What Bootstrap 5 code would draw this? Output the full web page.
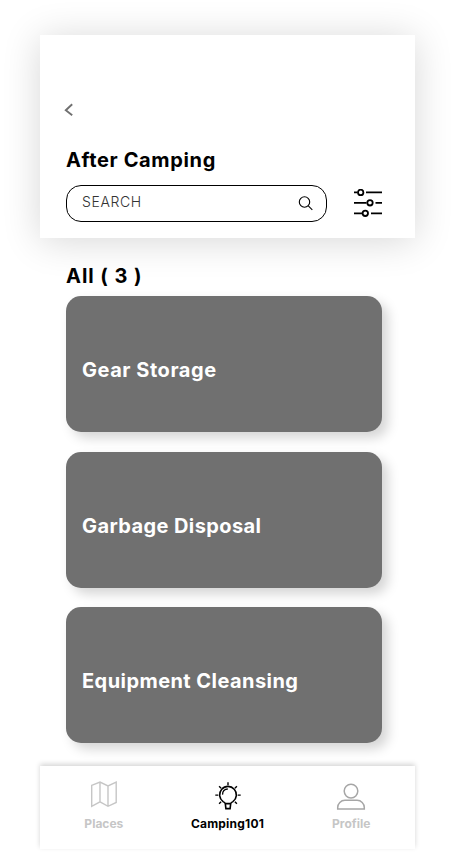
<!DOCTYPE html>
<html lang="en">
<head>
<meta charset="utf-8">
<meta name="viewport" content="width=device-width, initial-scale=1">
<title>After Camping</title>
<link href="https://cdn.jsdelivr.net/npm/bootstrap@5.3.0/dist/css/bootstrap.min.css" rel="stylesheet">
<style>
body{font-family:Inter,"Open Sans",sans-serif;color:#000;background:#fff;height:852px;overflow:hidden}
.phone{width:375px;margin-left:40px;padding-top:35px;height:852px}
.top-panel{height:203px;padding:68px 33px 0 26px;box-shadow:0 3px 36px rgba(0,0,0,.16)}
.back{width:12px;height:14px;margin-left:-3px;line-height:0}
.heading{font-size:20px;line-height:24px;font-weight:700;white-space:nowrap}
.title-main{margin-top:31px;letter-spacing:.64px}
.search-row{margin-top:13px}
.search-box{width:261px;height:37px;border:1px solid #000;border-radius:15px;padding:0 12px 0 15px}
.search-box input{font-size:14px;font-weight:300;line-height:18px;padding:0;color:#000;width:180px;height:20px;margin-top:-5px;letter-spacing:.6px}
.search-box input::placeholder{color:#333;opacity:1}
.filter-icon{margin-right:-1px}
.topics{padding:26px 33px 0 26px;height:528px}
.count{letter-spacing:.95px}
.topic-list{row-gap:19.6px}
.topic{height:136px;border-radius:15px;background:#707070;box-shadow:6px 6px 12px rgba(0,0,0,.17);padding:62px 16px 0;color:#fff;font-size:20px;line-height:24px;font-weight:700;white-space:nowrap}
.topic:hover{color:#fff}
.t-gear{letter-spacing:.54px}.t-garbage{letter-spacing:.4px}.t-equip{letter-spacing:.44px}
.tabs{height:83px;box-shadow:0 -2px 5px rgba(0,0,0,.17);padding:14px 2px 0 2px;background:#fff}
.tabs a{width:124px;font-size:12px;line-height:15px;font-weight:700;color:#c6c6c6;text-decoration:none}
.tabs a.active{color:#000;letter-spacing:.2px}
.tabs svg{display:block;margin-bottom:5px}
</style>
</head>
<body>
<main class="phone d-flex flex-column">
  <header class="top-panel flex-shrink-0">
    <a href="#" class="back d-block" aria-label="Back"><svg width="12" height="14" viewBox="0 0 12 14" fill="none" stroke="#707070" stroke-width="1.9"><path d="M9.2 1.2 2.8 7.2 9.2 12.2"/></svg></a>
    <h1 class="heading title-main mb-0">After Camping</h1>
    <div class="search-row d-flex align-items-center justify-content-between">
      <form class="search-box d-flex align-items-center justify-content-between">
        <input class="border-0 bg-transparent" type="text" placeholder="SEARCH" aria-label="Search">
        <svg width="16" height="16" viewBox="0 0 16 16" fill="none" stroke="#000" stroke-width="1.1"><circle cx="6.5" cy="6" r="5.2"/><path d="m10.3 9.8 4 4"/></svg>
      </form>
      <svg class="filter-icon" width="29" height="29" viewBox="0 0 29 29" fill="none" stroke="#000" stroke-width="1.8"><path d="M0 3.4h3.5M12 3.4h16M0 13.8h12.5M21.5 13.8H28M0 24.3h8M17 24.3h11"/><circle cx="6.7" cy="3.4" r="2.7"/><circle cx="16" cy="13.8" r="2.7"/><circle cx="11.3" cy="24.3" r="2.7"/></svg>
    </div>
  </header>
  <section class="topics flex-shrink-0">
    <h2 class="heading count mb-0">All ( 3 )</h2>
    <div class="topic-list d-grid mt-2">
      <a href="#" class="topic t-gear text-decoration-none">Gear Storage</a>
      <a href="#" class="topic t-garbage text-decoration-none">Garbage Disposal</a>
      <a href="#" class="topic t-equip text-decoration-none">Equipment Cleansing</a>
    </div>
  </section>
  <nav class="tabs d-flex flex-shrink-0">
    <a href="#" class="d-flex flex-column align-items-center"><svg width="30" height="31" viewBox="0 0 30 31" fill="none" stroke="#c6c6c6" stroke-width="1.4"><path d="M2.7 5.3 11 2l8 4 8.2-4v20.5L19 26.3l-8-4.5-8.3 4.5zM11 2v19.8M19 6v20.3"/></svg>Places</a>
    <a href="#" class="active d-flex flex-column align-items-center"><svg width="30" height="31" viewBox="0 0 30 31" fill="none" stroke="#000" stroke-width="1.6"><path d="M12.3 23.6c-.2-.9-1.1-1.4-2.2-2a8.4 8.4 0 1 1 9.8 0c-1.1.6-2 1.1-2.2 2zM12.3 23.6l.6 5h4.2l.6-5"/><path d="M9.6 14.6c-.2-3.4 2-5.6 5.2-5.6" stroke-width="1.3"/><path d="M15 2.2v3M2.3 15.1h3M24.7 15.1h3M6.1 6.2l2 2M23.9 6.2l-2 2M6.1 23.7l2-2M23.9 23.7l-2-2" stroke-width="1.4"/></svg>Camping101</a>
    <a href="#" class="d-flex flex-column align-items-center"><svg width="30" height="31" viewBox="0 0 30 31" fill="none" stroke="#a6a6a6" stroke-width="1.5"><circle cx="15" cy="11.1" r="6.8"/><path d="M1.7 29.1v-1.6a7.2 7.2 0 0 1 7.2-7.2h12.2a7.2 7.2 0 0 1 7.2 7.2v1.6z"/></svg>Profile</a>
  </nav>
</main>
<script src="https://cdn.jsdelivr.net/npm/bootstrap@5.3.0/dist/js/bootstrap.bundle.min.js"></script>
</body>
</html>
